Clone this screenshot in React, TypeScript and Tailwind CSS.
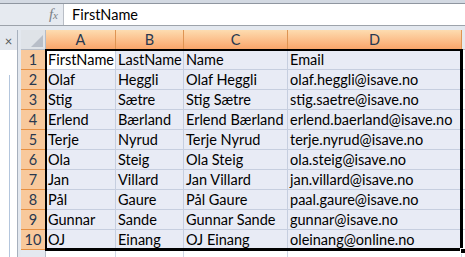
import React from "react";

const rows = [
  ["FirstName", "LastName", "Name", "Email"],
  ["Olaf", "Heggli", "Olaf Heggli", "olaf.heggli@isave.no"],
  ["Stig", "Sætre", "Stig Sætre", "stig.saetre@isave.no"],
  ["Erlend", "Bærland", "Erlend Bærland", "erlend.baerland@isave.no"],
  ["Terje", "Nyrud", "Terje Nyrud", "terje.nyrud@isave.no"],
  ["Ola", "Steig", "Ola Steig", "ola.steig@isave.no"],
  ["Jan", "Villard", "Jan Villard", "jan.villard@isave.no"],
  ["Pål", "Gaure", "Pål Gaure", "paal.gaure@isave.no"],
  ["Gunnar", "Sande", "Gunnar Sande", "gunnar@isave.no"],
  ["OJ", "Einang", "OJ Einang", "oleinang@online.no"],
];

const cols = ["A", "B", "C", "D"];

const App: React.FC = () => {
  return (
    <div
      className="w-[465px] h-[257px] overflow-hidden bg-[#e9edf3] text-[14.5px]"
      style={{ fontFamily: "Lato, 'Liberation Sans', sans-serif" }}
    >
      {/* formula bar */}
      <div className="h-[4px] bg-[#d3d9e2] border-b border-[#8f96a0]" />
      <div className="flex h-[22px] bg-[#e6eaf0] border-b border-[#9da3ab]">
        <div className="w-[63px] flex items-center justify-end pr-[5px]">
          <span
            className="italic text-[#7b7f86] text-[15px] leading-none"
            style={{ fontFamily: "'Liberation Serif', serif" }}
          >
            f<span className="text-[11px]">x</span>
          </span>
        </div>
        <div className="flex-1 bg-white border-l border-[#b9bec6] flex items-center pl-[8px] text-black">
          FirstName
        </div>
      </div>
      <div className="h-[4px] bg-[#e3e8ef]" />

      {/* sheet area */}
      <div className="flex h-[227px]">
        <div className="w-[18px] flex flex-col border-r border-[#a7b0bd] bg-white">
          <div className="h-[20px] bg-[#e3e7ee] flex items-center justify-center pt-[3px] text-[#555] text-[13px] leading-none">
            ×
          </div>
          <div className="flex-1 flex">
            <div className="w-[10px] border-r border-[#b4c6dd] mt-[25px]" />
          </div>
        </div>
        <div className="w-[3px] bg-[#e3e8ef]" />
        <div className="relative flex-1 grid grid-cols-[25px_70px_68px_104px_174px_1fr] auto-rows-[20px] bg-white">
          {/* header row */}
          <div className="bg-[#dfe3e8] border-r border-b border-[#b5bcc7] relative">
            <div className="absolute right-[2px] bottom-[2px] w-0 h-0 border-l-[12px] border-l-transparent border-b-[12px] border-b-[#b8bec8]" />
          </div>
          {cols.map((c) => (
            <div
              key={c}
              className="bg-gradient-to-b from-[#fddcb0] to-[#f9a56a] border-r border-b border-[#de9453] flex items-center justify-center text-[#28384f]"
            >
              {c}
            </div>
          ))}
          <div className="bg-[#e6e9ee] border-b border-[#b5bcc7]" />

          {rows.map((r, i) => (
            <React.Fragment key={i}>
              <div className="bg-[#f8c99c] border-b border-r border-[#e58f42] flex items-center justify-center text-[#28384f]">
                {i + 1}
              </div>
              {r.map((v, j) => (
                <div
                  key={j}
                  className={`${
                    i === 0 && j === 0 ? "bg-white" : "bg-[#e8ebf5]"
                  } border-r border-b border-[#c6cedf] flex items-center pl-[2px] pt-[1px] text-black whitespace-nowrap overflow-hidden`}
                >
                  {v}
                </div>
              ))}
              <div className="bg-white border-b border-[#d0d7e5]" />
            </React.Fragment>
          ))}

          {/* row 11 */}
          <div className="bg-[#e4e9f0] border-r border-[#b5bcc7]" />
          <div className="border-r border-[#d0d7e5]" />
          <div className="border-r border-[#d0d7e5]" />
          <div className="border-r border-[#d0d7e5]" />
          <div className="border-r border-[#d0d7e5]" />
          <div />

          {/* selection frame */}
          <div className="absolute left-[24px] top-[19px] w-[418px] h-[202px] border-2 border-black border-r-[3px] border-b-[3px] pointer-events-none" />
          <div className="absolute left-[439px] top-[218px] w-[6px] h-[6px] bg-black border border-white" />
        </div>
      </div>
    </div>
  );
};

export default App;
